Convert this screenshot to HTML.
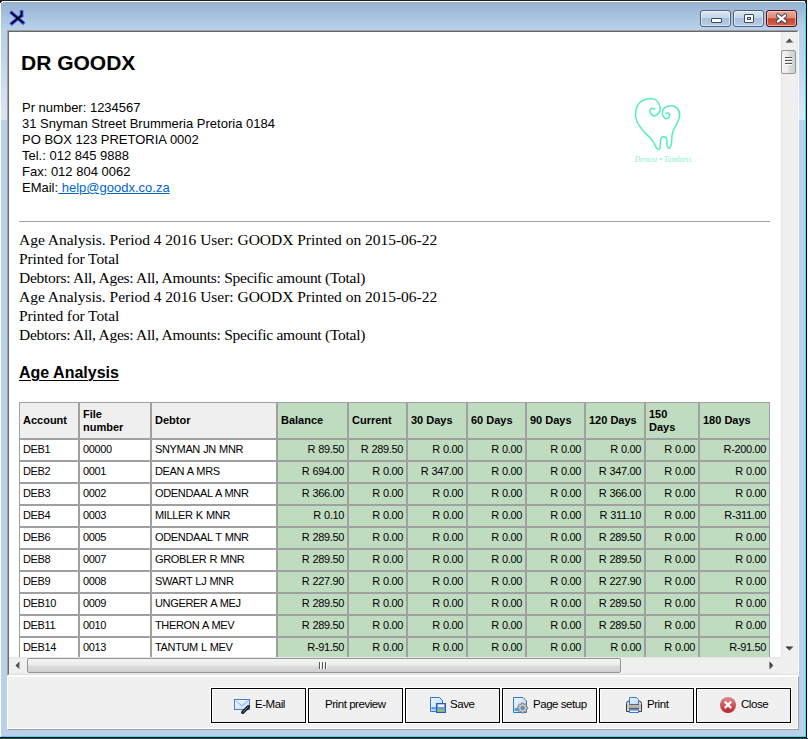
<!DOCTYPE html>
<html><head><meta charset="utf-8">
<style>
*{box-sizing:border-box;margin:0;padding:0}
html,body{width:808px;height:739px;overflow:hidden;background:#e8ecf0}
body{position:relative;font-family:"Liberation Sans",sans-serif;color:#000}
.a{position:absolute}
.win{left:0;top:0;width:807px;height:738px;background:#b9d1ea}
.title{left:1px;top:2px;width:804px;height:28px;background:linear-gradient(#95b2d1,#bad2eb)}
.cb{top:10px;height:17px;border:1px solid #4e617e;border-radius:3px;background:linear-gradient(#dbe7f3 0%,#c3d5ea 45%,#a7c0dc 50%,#b7cde6 100%);box-shadow:inset 0 0 0 1px rgba(255,255,255,.55)}
.cx{top:10px;height:17px;border:1px solid #4a1020;border-radius:3px;background:linear-gradient(#eaa898 0%,#dd8c78 45%,#c4452a 52%,#d5654a 100%);box-shadow:inset 0 0 0 1px rgba(255,220,210,.6)}
.frame{left:7px;top:30px;width:792px;height:646px;border-top:1px solid #a0a0a0;border-left:1px solid #a0a0a0;border-right:1px solid #fff;border-bottom:1px solid #fff}
.frame2{left:8px;top:31px;width:790px;height:644px;border-top:1px solid #696969;border-left:1px solid #696969;border-right:1px solid #e3e3e3;border-bottom:1px solid #e3e3e3;background:#fff}
.view{left:9px;top:32px;width:772px;height:625px;overflow:hidden;background:#fff}
.doc{position:absolute;left:-9px;top:-32px;width:808px;height:800px}
.vs{left:781px;top:32px;width:17px;height:625px;background:linear-gradient(90deg,#e3e3e3 0,#f0f0f0 2px,#f0f0f0 15px,#e8e8e8 17px)}
.hs{left:9px;top:657px;width:772px;height:17px;background:linear-gradient(#e3e3e3 0,#f0f0f0 2px,#f0f0f0 15px,#e8e8e8 17px)}
.corner{left:781px;top:657px;width:17px;height:17px;background:#f0f0f0}
.thumbv{left:781px;top:50px;width:15px;height:24px;border:1px solid #979797;border-radius:2px;background:linear-gradient(90deg,#f4f4f4 0%,#ececec 45%,#dcdcdc 55%,#cfcfcf 100%)}
.thumbh{left:27px;top:658px;width:594px;height:15px;border:1px solid #979797;border-radius:2px;background:linear-gradient(#f4f4f4 0%,#ececec 45%,#dcdcdc 55%,#cfcfcf 100%)}
.panel{left:7px;top:676px;width:792px;height:54px;background:#f0f0f0;border-left:1px solid #fff;border-top:1px solid #fff;border-right:1px solid #a0a0a0;border-bottom:1px solid #a0a0a0;box-shadow:inset -1px -1px 0 #fff}
.btn{top:687px;width:97px;height:37px;border:1px solid #fff;background:#f0f0f0}
.btn .in{position:absolute;left:0;top:0;width:95px;height:35px;border:1px solid #000;box-shadow:inset 1px 1px 0 #fff}
.btn .t{position:absolute;top:10px;font-size:11.5px;line-height:13px;letter-spacing:-0.45px;white-space:nowrap}
.btn svg{position:absolute}
.t13{font-size:13px;line-height:16px;white-space:nowrap}
.serif{font-family:"Liberation Serif",serif;font-size:15.5px;line-height:19px;white-space:nowrap}
table.grid{position:absolute;left:19px;top:402px;border-collapse:separate;border-spacing:0;table-layout:fixed;width:751px;font-size:11px}
.grid th,.grid td{border:1px solid #a0a0a0;padding:0 3px;overflow:hidden;white-space:nowrap}
.grid th{height:37px;text-align:left;font-weight:bold;line-height:13px;background:#efefef;vertical-align:middle}
.grid td{height:22px;line-height:13px;background:#fff;letter-spacing:-0.35px;word-spacing:0.5px;padding-bottom:1px}
.grid td.g{text-align:right;background:#c0dcc0}
.grid th.g{background:#c0dcc0}
</style></head><body>
<div class="a win"></div>
<div class="a title"></div>
<!-- window outer lines -->
<div class="a" style="left:0;top:0;width:807px;height:1px;background:#1e1e1e"></div>
<div class="a" style="left:806px;top:0;width:1px;height:738px;background:#101010"></div>
<div class="a" style="left:0;top:737px;width:807px;height:1px;background:#101010"></div>
<div class="a" style="left:0;top:1px;width:806px;height:1px;background:#fff"></div>
<div class="a" style="left:0;top:1px;width:1px;height:736px;background:#fff"></div>
<div class="a" style="left:805px;top:2px;width:1px;height:735px;background:#45d6f4"></div>
<div class="a" style="left:1px;top:736px;width:805px;height:1px;background:#45d6f4"></div>
<div class="a" style="left:807px;top:0;width:1px;height:739px;background:#f4f6f8"></div>
<div class="a" style="left:0;top:738px;width:808px;height:1px;background:#3c4550"></div>

<div class="a" style="left:1px;top:40px;width:6px;height:80px;background:linear-gradient(rgba(217,231,245,0),#d9e7f5)"></div>
<div class="a" style="left:799px;top:40px;width:6px;height:80px;background:linear-gradient(rgba(217,231,245,0),#d9e7f5)"></div>
<div class="a" style="left:0;top:0;width:3px;height:3px;background:#1e1e1e"></div>
<div class="a" style="left:1px;top:2px;width:2px;height:1px;background:#e8eef5"></div>
<div class="a" style="left:2px;top:1px;width:1px;height:2px;background:#e8eef5"></div>
<div class="a" style="left:804px;top:0;width:3px;height:3px;background:#1e1e1e"></div>
<div class="a" style="left:804px;top:1px;width:1px;height:2px;background:#c8f4fc"></div>
<!-- title icon -->
<svg class="a" style="left:8px;top:8px" width="20" height="20" viewBox="0 0 20 20">
 <g stroke="#3a5cff" stroke-width="3.6" stroke-linecap="square" fill="none">
  <path d="M3.6 4.8 L15 14.6"/><path d="M3.8 15.4 L13.2 7.8"/><path d="M13.6 3.8 L13.6 7.6"/>
 </g>
 <g stroke="#000" stroke-width="1.7" stroke-linecap="square" fill="none">
  <path d="M3.6 4.8 L15 14.6"/><path d="M3.8 15.4 L13.2 7.8"/><path d="M13.6 3.8 L13.6 7.6"/>
 </g>
</svg>

<!-- caption buttons -->
<div class="a cb" style="left:700px;width:31px"><div class="a" style="left:10px;top:7px;width:11px;height:5px;border:1px solid #3b4a60;border-radius:1px;background:#fff"></div></div>
<div class="a cb" style="left:733px;width:31px"><div class="a" style="left:10px;top:3px;width:10px;height:9px;border:1px solid #3b4a60;border-radius:1px;background:#fff"><div class="a" style="left:2px;top:2px;width:4px;height:3px;border:1px solid #3b4a60;background:#cfdcec"></div></div></div>
<div class="a cx" style="left:766px;width:31px">
 <svg class="a" style="left:0;top:0" width="29" height="15" viewBox="0 0 29 15">
  <path d="M11 4.6 L18 10.4 M18 4.6 L11 10.4" stroke="#3c4150" stroke-width="4.3" stroke-linecap="round"/>
  <path d="M11 4.6 L18 10.4 M18 4.6 L11 10.4" stroke="#fff" stroke-width="2.4" stroke-linecap="round"/>
 </svg>
</div>

<!-- content frame -->
<div class="a frame"></div>
<div class="a frame2"></div>
<div class="a view"><div class="doc">
 <div class="a" style="left:21px;top:51px;font-size:21px;line-height:24px;font-weight:bold;white-space:nowrap">DR GOODX</div>
 <div class="a t13" style="left:22px;top:100px">Pr number: 1234567<br>31 Snyman Street Brummeria Pretoria 0184<br>PO BOX 123 PRETORIA 0002<br>Tel.: 012 845 9888<br>Fax: 012 804 0062<br>EMail:<span style="color:#0066cc;text-decoration:underline"> help@goodx.co.za</span></div>
 <svg class="a" style="left:625px;top:90px" width="75" height="80" viewBox="0 0 75 80">
  <g fill="none" stroke="#52eeb8" stroke-width="1.5" stroke-linecap="round" stroke-linejoin="round"><path d="M29.8 18.9 C29.2 18.8 27.3 17.9 26.5 18.4 C25.7 18.8 24.5 20.4 24.9 21.6 C25.3 22.9 27.2 25.7 28.7 26.0 C30.1 26.2 32.5 24.7 33.5 23.3 C34.6 21.8 35.5 19.5 35.2 17.3 C34.8 15.2 33.0 11.7 31.4 10.3 C29.8 8.8 28.0 8.5 25.4 8.7 C22.9 8.8 18.7 9.4 16.2 11.4 C13.8 13.3 11.5 17.2 10.8 20.6 C10.1 23.9 10.5 27.8 11.9 31.4 C13.3 35.0 17.3 39.5 19.5 42.2 C21.7 44.9 23.4 45.8 25.0 47.6 C26.6 49.4 27.7 51.3 28.8 53.0 C29.9 54.7 30.6 56.7 31.4 57.8 C32.2 58.9 32.8 59.6 33.4 59.6 C34.0 59.6 34.7 59.1 35.0 58.0 C35.3 56.9 35.3 54.5 35.4 53.0 C35.5 51.5 35.4 50.0 35.7 49.0 C36.0 48.0 36.6 47.6 37.1 47.2 C37.6 46.8 38.3 46.8 38.9 46.8 C39.5 46.8 40.3 46.9 40.8 47.4 C41.3 47.9 41.7 48.7 41.9 50.0 C42.1 51.3 41.9 53.7 42.1 55.0 C42.3 56.3 42.7 57.4 43.2 57.8 C43.7 58.2 44.4 58.1 44.9 57.5 C45.4 56.9 46.1 55.4 46.4 54.0 C46.7 52.6 46.6 50.7 46.8 49.0 C46.9 47.3 46.9 45.7 47.3 44.0 C47.7 42.3 48.2 40.7 49.0 39.0 C49.8 37.3 51.0 35.9 51.9 33.5 C52.9 31.2 54.7 27.5 54.7 24.9 C54.7 22.3 53.5 19.4 51.9 17.9 C50.4 16.3 47.6 15.6 45.5 15.7 C43.3 15.8 40.3 17.0 39.0 18.4 C37.6 19.8 37.1 22.1 37.3 23.8 C37.6 25.5 39.4 28.2 40.6 28.7 C41.8 29.1 43.8 27.4 44.4 26.5 C44.9 25.6 44.4 23.8 43.8 23.3 C43.3 22.7 41.6 23.3 41.1 23.3"/></g>
  <text x="9.5" y="72" font-family="Liberation Serif" font-style="italic" font-size="8.5" fill="#60eec0" fill-opacity="0.8" textLength="57" lengthAdjust="spacingAndGlyphs">Dentist • Tandarts</text>
 </svg>
 <div class="a" style="left:19px;top:221px;width:751px;height:1px;background:#a0a0a0"></div>
 <div class="a serif" style="left:19px;top:230px"><span style="letter-spacing:-0.02px">Age Analysis. Period 4 2016 User: GOODX Printed on 2015-06-22</span><br><span style="letter-spacing:-0.1px">Printed for Total</span><br><span style="letter-spacing:-0.26px">Debtors: All, Ages: All, Amounts: Specific amount (Total)</span><br><span style="letter-spacing:-0.02px">Age Analysis. Period 4 2016 User: GOODX Printed on 2015-06-22</span><br><span style="letter-spacing:-0.1px">Printed for Total</span><br><span style="letter-spacing:-0.26px">Debtors: All, Ages: All, Amounts: Specific amount (Total)</span></div>
 <div class="a" style="left:19px;top:363px;font-size:16px;line-height:19px;font-weight:bold;text-decoration:underline;text-underline-offset:2px;text-decoration-thickness:1px;white-space:nowrap">Age Analysis</div>
 <table class="grid"><colgroup><col style="width:60px"><col style="width:72px"><col style="width:126px"><col style="width:71px"><col style="width:59px"><col style="width:60px"><col style="width:59px"><col style="width:59px"><col style="width:60px"><col style="width:54px"><col style="width:71px"></colgroup><tr class="hd"><th>Account</th><th>File<br>number</th><th>Debtor</th><th class="g">Balance</th><th class="g">Current</th><th class="g">30 Days</th><th class="g">60 Days</th><th class="g">90 Days</th><th class="g">120 Days</th><th class="g">150<br>Days</th><th class="g">180 Days</th></tr><tr><td>DEB1</td><td>00000</td><td>SNYMAN JN MNR</td><td class="g">R 89.50</td><td class="g">R 289.50</td><td class="g">R 0.00</td><td class="g">R 0.00</td><td class="g">R 0.00</td><td class="g">R 0.00</td><td class="g">R 0.00</td><td class="g">R-200.00</td></tr><tr><td>DEB2</td><td>0001</td><td>DEAN A MRS</td><td class="g">R 694.00</td><td class="g">R 0.00</td><td class="g">R 347.00</td><td class="g">R 0.00</td><td class="g">R 0.00</td><td class="g">R 347.00</td><td class="g">R 0.00</td><td class="g">R 0.00</td></tr><tr><td>DEB3</td><td>0002</td><td>ODENDAAL A MNR</td><td class="g">R 366.00</td><td class="g">R 0.00</td><td class="g">R 0.00</td><td class="g">R 0.00</td><td class="g">R 0.00</td><td class="g">R 366.00</td><td class="g">R 0.00</td><td class="g">R 0.00</td></tr><tr><td>DEB4</td><td>0003</td><td>MILLER K MNR</td><td class="g">R 0.10</td><td class="g">R 0.00</td><td class="g">R 0.00</td><td class="g">R 0.00</td><td class="g">R 0.00</td><td class="g">R 311.10</td><td class="g">R 0.00</td><td class="g">R-311.00</td></tr><tr><td>DEB6</td><td>0005</td><td>ODENDAAL T MNR</td><td class="g">R 289.50</td><td class="g">R 0.00</td><td class="g">R 0.00</td><td class="g">R 0.00</td><td class="g">R 0.00</td><td class="g">R 289.50</td><td class="g">R 0.00</td><td class="g">R 0.00</td></tr><tr><td>DEB8</td><td>0007</td><td>GROBLER R MNR</td><td class="g">R 289.50</td><td class="g">R 0.00</td><td class="g">R 0.00</td><td class="g">R 0.00</td><td class="g">R 0.00</td><td class="g">R 289.50</td><td class="g">R 0.00</td><td class="g">R 0.00</td></tr><tr><td>DEB9</td><td>0008</td><td>SWART LJ MNR</td><td class="g">R 227.90</td><td class="g">R 0.00</td><td class="g">R 0.00</td><td class="g">R 0.00</td><td class="g">R 0.00</td><td class="g">R 227.90</td><td class="g">R 0.00</td><td class="g">R 0.00</td></tr><tr><td>DEB10</td><td>0009</td><td>UNGERER A MEJ</td><td class="g">R 289.50</td><td class="g">R 0.00</td><td class="g">R 0.00</td><td class="g">R 0.00</td><td class="g">R 0.00</td><td class="g">R 289.50</td><td class="g">R 0.00</td><td class="g">R 0.00</td></tr><tr><td>DEB11</td><td>0010</td><td>THERON A MEV</td><td class="g">R 289.50</td><td class="g">R 0.00</td><td class="g">R 0.00</td><td class="g">R 0.00</td><td class="g">R 0.00</td><td class="g">R 289.50</td><td class="g">R 0.00</td><td class="g">R 0.00</td></tr><tr><td>DEB14</td><td>0013</td><td>TANTUM L MEV</td><td class="g">R-91.50</td><td class="g">R 0.00</td><td class="g">R 0.00</td><td class="g">R 0.00</td><td class="g">R 0.00</td><td class="g">R 0.00</td><td class="g">R 0.00</td><td class="g">R-91.50</td></tr><tr><td>DEB15</td><td>0014</td><td>VAN WYK P MNR</td><td class="g">R 0.00</td><td class="g">R 0.00</td><td class="g">R 0.00</td><td class="g">R 0.00</td><td class="g">R 0.00</td><td class="g">R 0.00</td><td class="g">R 0.00</td><td class="g">R 0.00</td></tr></table>
</div></div>

<!-- vertical scrollbar -->
<div class="a vs"></div>
<svg class="a" style="left:784px;top:36px" width="11" height="8" viewBox="0 0 11 8"><defs><linearGradient id="ag" x1="0" y1="0" x2="1" y2="1"><stop offset="0" stop-color="#111"/><stop offset="1" stop-color="#8a8a8a"/></linearGradient></defs><path d="M1.5 6.8 L5.5 2.5 L9.5 6.8 Z" fill="url(#ag)"/></svg>
<div class="a thumbv"><div class="a" style="left:3px;top:6px;width:7px;height:1px;background:#555;box-shadow:0 3px 0 #555,0 6px 0 #555,0 1px 0 #fff,0 4px 0 #fff,0 7px 0 #fff"></div></div>
<svg class="a" style="left:784px;top:645px" width="11" height="8" viewBox="0 0 11 8"><path d="M1.5 1.5 L5.5 5.8 L9.5 1.5 Z" fill="url(#ag)"/></svg>
<!-- horizontal scrollbar -->
<div class="a hs"></div>
<svg class="a" style="left:13px;top:660px" width="8" height="11" viewBox="0 0 8 11"><path d="M6.5 1.5 L2.5 5.5 L6.5 9.5 Z" fill="url(#ag)"/></svg>
<div class="a thumbh"><div class="a" style="left:294px;top:3px;width:1px;height:7px;background:#555;box-shadow:3px 0 0 #555,-3px 0 0 #555,1px 0 0 #fff,4px 0 0 #fff,-2px 0 0 #fff"></div></div>
<svg class="a" style="left:768px;top:660px" width="8" height="11" viewBox="0 0 8 11"><path d="M1.5 1.5 L5.5 5.5 L1.5 9.5 Z" fill="url(#ag)"/></svg>
<div class="a corner"></div>

<!-- bottom panel -->
<div class="a panel"></div>
<div class="a btn" style="left:210px"><div class="in"></div><div class="t" style="left:44px">E-Mail</div></div>
<div class="a btn" style="left:307px"><div class="in"></div><div class="t" style="left:17px">Print preview</div></div>
<div class="a btn" style="left:404px"><div class="in"></div><div class="t" style="left:45px">Save</div></div>
<div class="a btn" style="left:501px"><div class="in"></div><div class="t" style="left:31px">Page setup</div></div>
<div class="a btn" style="left:598px"><div class="in"></div><div class="t" style="left:48px">Print</div></div>
<div class="a btn" style="left:695px"><div class="in"></div><div class="t" style="left:45px">Close</div></div>
<svg class="a" style="left:233px;top:697px" width="18" height="17" viewBox="0 0 18 17">
 <defs><linearGradient id="eg" x1="0" y1="0" x2="1" y2="1"><stop offset="0" stop-color="#f2f8ff"/><stop offset="1" stop-color="#c4dcf6"/></linearGradient></defs>
 <rect x="1.5" y="2.5" width="15" height="10" fill="url(#eg)" stroke="#3f7fd2"/>
 <path d="M2.8 3.8 L9 8.8 L15.2 3.8" fill="none" stroke="#86aee6" stroke-width="1"/>
 <path d="M8.6 15.2 L14.6 9.2 C15.6 8.2 17 9.4 16 10.6 L10.4 16 C9.6 16.8 8.2 15.8 9 14.8 L13.6 10.4" fill="none" stroke="#111" stroke-width="1.4"/>
 <path d="M11.4 13.6 L14 11" stroke="#4a86d6" stroke-width="1"/>
</svg>
<svg class="a" style="left:429px;top:696px" width="18" height="18" viewBox="0 0 18 18">
 <defs><linearGradient id="dg" x1="0" y1="0" x2="1" y2="1"><stop offset="0" stop-color="#eef6ff"/><stop offset="1" stop-color="#b8d6f6"/></linearGradient></defs>
 <path d="M1.5 1.5 H10.5 L13.5 4.5 V15.5 H1.5 Z" fill="url(#dg)" stroke="#3574cc"/>
 <rect x="2.5" y="11" width="5" height="2.5" fill="#4aa8f4"/>
 <rect x="7.5" y="7.5" width="9" height="9" fill="#7096d6" stroke="#2d5cb6"/>
 <rect x="9" y="8.5" width="6" height="2.5" fill="#f4f8fe"/>
 <rect x="9" y="13.5" width="6" height="2" fill="#8fce4a"/>
</svg>
<svg class="a" style="left:512px;top:696px" width="18" height="18" viewBox="0 0 18 18">
 <path d="M1.5 1.5 H11 L14.5 5 V16.5 H1.5 Z" fill="url(#dg)" stroke="#3574cc"/>
 <rect x="2.5" y="12" width="5" height="3" fill="#4aa8f4"/>
 <g transform="translate(10.6 12)">
  <path d="M-1 -5 H1 L1.4 -3.4 L2.9 -4.1 L4.1 -2.9 L3.4 -1.4 L5 -1 V1 L3.4 1.4 L4.1 2.9 L2.9 4.1 L1.4 3.4 L1 5 H-1 L-1.4 3.4 L-2.9 4.1 L-4.1 2.9 L-3.4 1.4 L-5 1 V-1 L-3.4 -1.4 L-4.1 -2.9 L-2.9 -4.1 L-1.4 -3.4 Z" fill="#c9c9c9" stroke="#6e6e6e" stroke-width="0.8"/>
  <circle r="1.7" fill="#3aa0f0" stroke="#555" stroke-width="0.5"/>
 </g>
</svg>
<svg class="a" style="left:625px;top:696px" width="18" height="18" viewBox="0 0 18 18">
 <defs><linearGradient id="pg" x1="0" y1="0" x2="0" y2="1"><stop offset="0" stop-color="#f4f4f4"/><stop offset=".5" stop-color="#bdbdbd"/><stop offset="1" stop-color="#e6e6e6"/></linearGradient></defs>
 <path d="M1.5 15.5 V7.5 Q1.5 5 4 5 H14 Q16.5 5 16.5 7.5 V15.5 Z" fill="url(#pg)" stroke="#3a3a3a"/>
 <path d="M4.5 1.5 H11.5 L13.5 3.5 V8.5 H4.5 Z" fill="url(#dg)" stroke="#3a7ad0"/>
 <path d="M4 8.5 H14" stroke="#666" stroke-width="1"/>
 <rect x="4" y="9.5" width="10" height="3" fill="#b0b0b0"/>
 <path d="M4 12.8 H14" stroke="#333" stroke-width="1"/>
 <rect x="4.5" y="14" width="9" height="2.5" fill="#eef4fc" stroke="#3a7ad0"/>
</svg>
<svg class="a" style="left:719px;top:696px" width="18" height="18" viewBox="0 0 18 18">
 <defs><linearGradient id="rg" x1="0" y1="0" x2="0" y2="1"><stop offset="0" stop-color="#e08a8a"/><stop offset="1" stop-color="#b8222a"/></linearGradient></defs>
 <circle cx="9" cy="9" r="8" fill="url(#rg)"/>
 <path d="M6.6 6.4 L11.4 11.2 M11.4 6.4 L6.6 11.2" stroke="#fff" stroke-width="2.3" stroke-linecap="square"/>
</svg>
</body></html>
